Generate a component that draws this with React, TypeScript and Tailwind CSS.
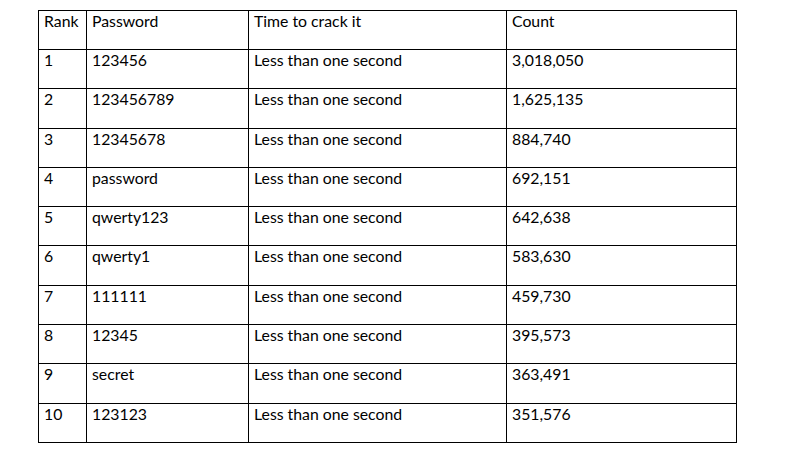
const rows = [
  { rank: '1', password: '123456', count: '3,018,050' },
  { rank: '2', password: '123456789', count: '1,625,135' },
  { rank: '3', password: '12345678', count: '884,740' },
  { rank: '4', password: 'password', count: '692,151' },
  { rank: '5', password: 'qwerty123', count: '642,638' },
  { rank: '6', password: 'qwerty1', count: '583,630' },
  { rank: '7', password: '111111', count: '459,730' },
  { rank: '8', password: '12345', count: '395,573' },
  { rank: '9', password: 'secret', count: '363,491' },
  { rank: '10', password: '123123', count: '351,576' },
]

const cell = 'border border-black px-[5px] pt-0 align-top font-normal text-left'

export default function App() {
  return (
    <div className="h-[450px] w-[800px] bg-white pt-[10px] pl-[38px] font-['Lato','Liberation_Sans',sans-serif] text-[15.8px] leading-[20px] text-black">
      <table className="w-[698px] table-fixed border-collapse">
        <colgroup>
          <col className="w-[48px]" />
          <col className="w-[162px]" />
          <col className="w-[258px]" />
          <col className="w-[230px]" />
        </colgroup>
        <thead>
          <tr className="h-[39px]">
            <th className={cell}>Rank</th>
            <th className={cell}>Password</th>
            <th className={cell}>Time to crack it</th>
            <th className={cell}>Count</th>
          </tr>
        </thead>
        <tbody>
          {rows.map((r) => (
            <tr key={r.rank} className="h-[39.3px]">
              <td className={cell}>{r.rank}</td>
              <td className={cell}>{r.password}</td>
              <td className={cell}>Less than one second</td>
              <td className={cell}>{r.count}</td>
            </tr>
          ))}
        </tbody>
      </table>
    </div>
  )
}
